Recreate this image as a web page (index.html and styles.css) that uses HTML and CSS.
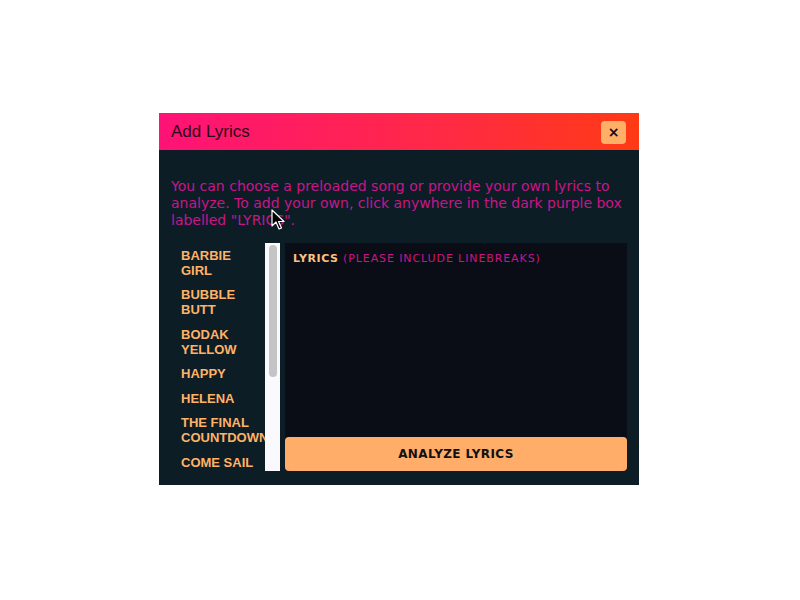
FILE: index.html
```html
<!DOCTYPE html>
<html>
<head>
<meta charset="utf-8">
<link rel="stylesheet" href="styles.css">
</head>
<body>
<div class="modal">
  <div class="modal-header">
    <span class="modal-title">Add Lyrics</span>
    <button class="close-btn">×</button>
  </div>
  <div class="modal-body">
    <p class="intro">You can choose a preloaded song or provide your own lyrics to analyze. To add your own, click anywhere in the dark purple box labelled "LYRICS".</p>
    <div class="workspace">
      <div class="song-list">
        <ul class="songs">
          <li>BARBIE GIRL</li>
          <li>BUBBLE BUTT</li>
          <li>BODAK YELLOW</li>
          <li>HAPPY</li>
          <li>HELENA</li>
          <li>THE FINAL COUNTDOWN</li>
          <li>COME SAIL AWAY</li>
          <li>SHAKE IT OFF</li>
        </ul>
        <div class="scrollbar"><div class="thumb"></div></div>
      </div>
      <div class="lyrics-panel">
        <div class="lyrics-label"><span class="label-main">LYRICS</span> <span class="label-note">(PLEASE INCLUDE LINEBREAKS)</span></div>
        <div class="lyrics-area"></div>
        <button class="analyze-btn">ANALYZE LYRICS</button>
      </div>
    </div>
  </div>
  <svg class="cursor" width="14" height="22" viewBox="0 0 14 22">
    <path d="M1 1 L1 17 L5 13 L8 20 L10.5 19 L7.5 12.5 L13 12.5 Z" fill="#000" stroke="#fff" stroke-width="1.2" stroke-linejoin="round"/>
  </svg>
</div>
</body>
</html>
```

FILE: styles.css
```css
html, body {
  margin: 0;
  padding: 0;
  background: #ffffff;
}
body {
  width: 800px;
  height: 600px;
  display: flex;
  align-items: center;
  justify-content: center;
  font-family: "DejaVu Sans", "Liberation Sans", sans-serif;
}
.modal {
  position: relative;
  width: 480px;
  height: 372px;
  margin-left: -2px;
  margin-top: -2px;
  background: #0c1d26;
  display: flex;
  flex-direction: column;
}
.modal-header {
  height: 37px;
  flex: none;
  background: linear-gradient(90deg, #ff1277 0%, #ff2a44 60%, #ff3a14 100%);
  display: flex;
  align-items: center;
  justify-content: space-between;
  padding: 0 13px 0 12px;
}
.modal-title {
  font-family: "Liberation Sans", sans-serif;
  font-size: 17px;
  color: #2a0a1a;
}
.close-btn {
  width: 25px;
  height: 23px;
  border: none;
  border-radius: 4px;
  background: #ffb066;
  color: #101020;
  font-family: "DejaVu Sans", sans-serif;
  font-size: 14px;
  font-weight: bold;
  line-height: 23px;
  padding: 0;
  margin-top: 1px;
}
.modal-body {
  flex: 1;
  display: flex;
  flex-direction: column;
  padding: 28px 12px 14px 12px;
  min-height: 0;
}
.intro {
  margin: 0 -6px 14px 0;
  font-size: 14px;
  line-height: 17px;
  height: 51px;
  color: #c8158a;
}
.workspace {
  height: 228px;
  flex: none;
  display: flex;
  gap: 5px;
}
.song-list {
  width: 109px;
  flex: none;
  display: flex;
  overflow: hidden;
}
.songs {
  list-style: none;
  margin: 0;
  padding: 0 0 0 10px;
  flex: 1;
  overflow: hidden;
  min-width: 0;
}
.songs li {
  font-family: "Liberation Sans", sans-serif;
  font-weight: bold;
  font-size: 13px;
  line-height: 15px;
  color: #ffb266;
  padding: 4.5px 0 5px;
  width: 76px;
  white-space: normal;
}
.scrollbar {
  width: 15px;
  flex: none;
  background: #fafafe;
  padding: 2px 3px;
  box-sizing: border-box;
}
.thumb {
  width: 8px;
  height: 132px;
  margin: 0 auto;
  border-radius: 4px;
  background: #c4c4c4;
}
.lyrics-panel {
  flex: 1;
  background: #0a0d16;
  display: flex;
  flex-direction: column;
}
.lyrics-label {
  padding: 9px 8px 0;
  font-family: "DejaVu Sans", sans-serif;
  font-size: 11px;
  font-weight: bold;
  letter-spacing: 0.6px;
}
.label-main {
  color: #ffc080;
}
.label-note {
  color: #c8158a;
  font-weight: normal;
  letter-spacing: 0.9px;
}
.lyrics-area {
  flex: 1;
}
.analyze-btn {
  height: 34px;
  flex: none;
  border: none;
  border-radius: 4px;
  background: #ffad69;
  color: #111;
  font-family: "DejaVu Sans", sans-serif;
  font-weight: bold;
  font-size: 12px;
  letter-spacing: 0.4px;
  padding: 0;
}
.cursor {
  position: absolute;
  left: 112px;
  top: 96px;
}
```
